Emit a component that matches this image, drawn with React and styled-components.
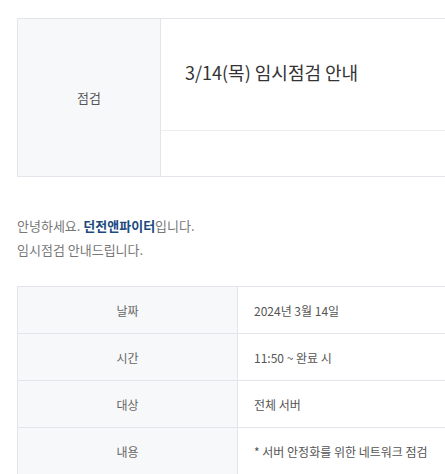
import React from "react";
import styled, { createGlobalStyle } from "styled-components";

const GlobalStyle = createGlobalStyle`
  *,
  *::before,
  *::after {
    box-sizing: border-box;
  }
  body {
    margin: 0;
    padding: 0;
    background-color: #fff;
    font-family: "Noto Sans CJK KR", "Noto Sans", sans-serif;
    overflow: hidden;
  }
`;

const details = [
  { label: "날짜", value: "2024년 3월 14일" },
  { label: "시간", value: "11:50 ~ 완료 시" },
  { label: "대상", value: "전체 서버" },
  { label: "내용", value: "* 서버 안정화를 위한 네트워크 점검" },
];

function App() {
  return (
    <Page>
      <GlobalStyle />
      <TitleBoard>
        <Category>점검</Category>
        <TitleCell>
          <Title>3/14(목) 임시점검 안내</Title>
        </TitleCell>
        <MetaCell />
      </TitleBoard>
      <Body>
        <Paragraph>
          안녕하세요. <Brand>던전앤파이터</Brand>입니다.
          <br />
          임시점검 안내드립니다.
        </Paragraph>
      </Body>
      <DetailTable>
        {details.map(row => (
          <DetailRow key={row.label}>
            <DetailLabel>{row.label}</DetailLabel>
            <DetailValue>{row.value}</DetailValue>
          </DetailRow>
        ))}
      </DetailTable>
    </Page>
  );
}

const Page = styled.div`
  padding: 18px 0 0 17px;
  width: 445px;
  height: 474px;
  overflow: hidden;
`;
const TitleBoard = styled.div`
  display: grid;
  grid-template-columns: 143px 1fr;
  grid-template-rows: 112px 45px;
  width: 460px;
  border: 1px solid #e3e5ea;
`;
const Category = styled.div`
  grid-row: 1 / span 2;
  display: flex;
  align-items: center;
  justify-content: center;
  background-color: #f7f8fa;
  border-right: 1px solid #e3e5ea;
  font-size: 13px;
  color: #555;
`;
const TitleCell = styled.div`
  display: flex;
  align-items: center;
  padding: 0 0 6px 24px;
  border-bottom: 1px solid #ebedf0;
`;
const Title = styled.h1`
  margin: 0;
  font-size: 18px;
  font-weight: 400;
  color: #333;
`;
const MetaCell = styled.div``;
const Body = styled.div`
  padding: 37px 0 24px;
`;
const Paragraph = styled.p`
  margin: 0;
  font-size: 13px;
  line-height: 24px;
  color: #777;
`;
const Brand = styled.strong`
  font-weight: 700;
  color: #1c4a80;
`;
const DetailTable = styled.div`
  width: 460px;
  border-top: 1px solid #e3e5ea;
`;
const DetailRow = styled.div`
  display: grid;
  grid-template-columns: 221px 1fr;
  height: 47px;
  border-bottom: 1px solid #e3e5ea;
`;
const DetailLabel = styled.div`
  display: flex;
  align-items: center;
  justify-content: center;
  background-color: #f7f8fa;
  border-left: 1px solid #e3e5ea;
  border-right: 1px solid #e3e5ea;
  font-size: 12px;
  color: #666;
`;
const DetailValue = styled.div`
  display: flex;
  align-items: center;
  padding-left: 16px;
  font-size: 12px;
  color: #555;
`;

export default App;
